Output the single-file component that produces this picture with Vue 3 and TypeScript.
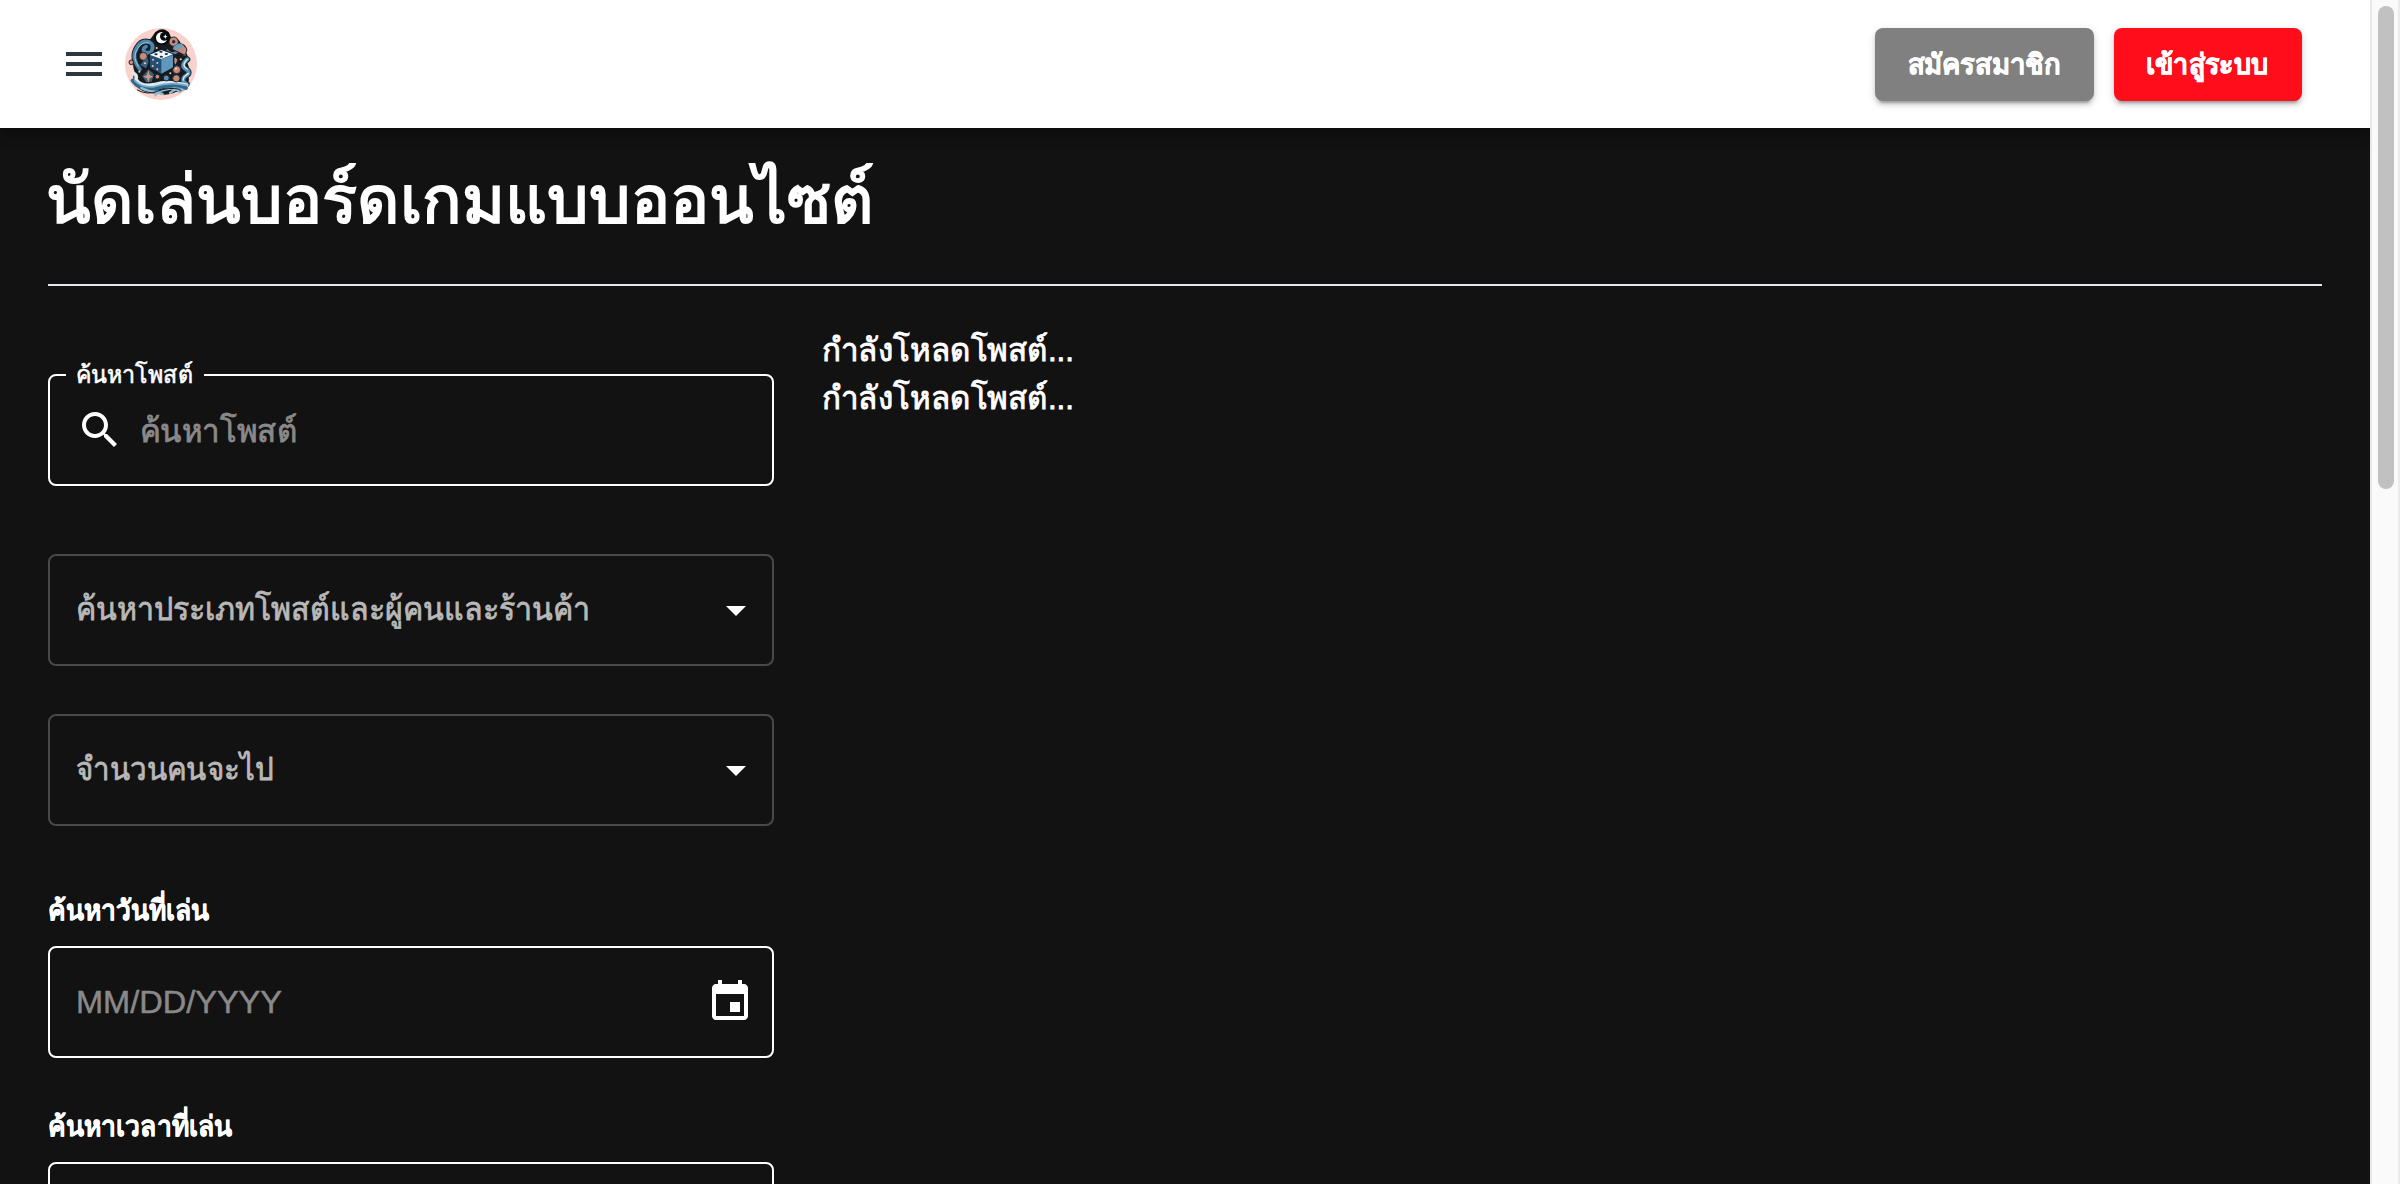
<script setup lang="ts">
import type { Directive } from 'vue'

interface SelectField {
  label: string
  width: number
}

const selects: SelectField[] = [
  { label: 'ค้นหาประเภทโพสต์และผู้คนและร้านค้า', width: 514 },
  { label: 'จำนวนคนจะไป', width: 197 },
]

// Scales a line of text horizontally so that it spans the given width.
const vFit: Directive<HTMLElement, number> = {
  mounted(el, binding) {
    const natural = el.getBoundingClientRect().width
    if (natural > 0) el.style.transform = `scaleX(${binding.value / natural})`
  },
}
</script>

<template>
  <div class="window">
    <div class="page">
      <header class="appbar">
        <div class="brand">
          <button class="menu" aria-label="menu"><i></i><i></i><i></i></button>
          <svg class="logo" viewBox="15 18 216 216">
            <circle cx="123" cy="126" r="108" fill="#f9d3cb" />
            <path d="M44 82Q54 52 92 50L106 30Q126 18 146 30L156 52Q176 46 182 64Q204 68 198 92Q208 104 202 124Q212 140 203 160Q212 176 200 190Q194 212 168 210Q140 224 108 214Q66 216 48 190Q34 166 44 150Q34 128 44 82Z" fill="#171b1d" />
            <g fill="none" stroke-linecap="round" stroke-linejoin="round">
              <path d="M60 142Q32 108 50 78Q64 52 88 60Q104 70 94 88Q82 98 72 88Q68 78 78 74" stroke="#15242f" stroke-width="17" />
              <path d="M60 142Q32 108 50 78Q64 52 88 60Q104 70 94 88Q82 98 72 88Q68 78 78 74" stroke="#4f86ab" stroke-width="11" />
              <path d="M54 132Q36 104 53 80Q66 57 88 63" stroke="#9cc4d8" stroke-width="3" />
              <path d="M142 86Q150 98 166 92Q184 76 194 98" stroke="#4f86ab" stroke-width="8" />
              <path d="M202 112Q178 132 200 143Q214 154 194 164Q182 178 200 186" stroke="#15242f" stroke-width="18" />
              <path d="M202 112Q178 132 200 143Q214 154 194 164Q182 178 200 186" stroke="#5b91b4" stroke-width="12" />
              <path d="M202 112Q182 132 202 141M206 154Q188 164 190 174" stroke="#d8eaf0" stroke-width="4" />
              <path d="M38 154Q52 156 48 172Q62 196 102 188Q146 174 200 190" stroke="#d9eaf0" stroke-width="11" />
              <path d="M38 176Q62 208 104 200Q150 184 198 198" stroke="#33688d" stroke-width="12" />
              <path d="M44 176Q68 200 106 193Q150 178 200 190" stroke="#79abc8" stroke-width="5" />
              <path d="M64 198Q98 216 134 204Q166 194 190 204M106 220Q110 208 128 216M150 213Q170 196 178 210" stroke="#91bdd2" stroke-width="7" />
              <path d="M52 204Q82 220 112 208Q146 194 180 202" stroke="#16202b" stroke-width="3" />
            </g>
            <g fill="#c58b80" stroke="#20252b" stroke-width="3">
              <circle cx="161" cy="59" r="14" />
              <path d="M157 82Q174 52 198 76Q204 84 194 100Q180 92 157 82Z" />
              <circle cx="170" cy="143" r="12" /><circle cx="169" cy="169" r="11" />
              <circle cx="70" cy="103" r="12" /><circle cx="34" cy="121" r="7" />
              <circle cx="112" cy="164" r="7" /><path d="M164 104l10 9-7 17-10-13z" />
            </g>
            <path d="M158 79Q174 56 192 70L174 85Z" fill="#6f9ebd" />
            <circle cx="161" cy="59" r="5" fill="#222b32" />
            <path d="M60 129l20-24 8 12-10 22zM86 142l16 15-7 22-16 2-12-18z" fill="#39617e" />
            <path d="M85 145l4 14 11 5-11 5-4 13-4-13-11-5 11-5z" fill="#d49786" />
            <circle cx="139" cy="168" r="9" fill="#5c8faf" stroke="#17222a" stroke-width="3" />
            <circle cx="126" cy="46" r="24" fill="#080b0c" />
            <circle cx="125" cy="47" r="17" fill="#fff" />
            <circle cx="133" cy="43" r="13" fill="#080b0c" />
            <path d="M136 37l2 5 5 2-5 2-2 5-2-5-5-2 5-2z" fill="#fff" />
            <path d="M87 98L124 82L161 97V137L124 158L88 138Z" fill="#244f72" stroke="#111b24" stroke-width="4" />
            <path d="M89 98L124 84L159 97L124 111Z" fill="#f4f7f6" />
            <path d="M124 112L159 99V136L124 155Z" fill="#5f97bd" />
            <g fill="#173348"><ellipse cx="123" cy="89" rx="5" ry="3" /><ellipse cx="108" cy="97" rx="5" ry="3" /><ellipse cx="139" cy="96" rx="5" ry="3" /><ellipse cx="124" cy="104" rx="5" ry="3" /></g>
            <g fill="#efc2b3"><circle cx="99" cy="113" r="3" /><circle cx="112" cy="123" r="3" /><circle cx="98" cy="132" r="3" /><circle cx="112" cy="142" r="3" /></g>
            <g fill="#f5d3c8"><circle cx="58" cy="149" r="3" /><circle cx="151" cy="154" r="3" /><circle cx="75" cy="124" r="3" /><circle cx="182" cy="112" r="3" /><circle cx="110" cy="78" r="3" /><circle cx="168" cy="140" r="3" /></g>
          </svg>
        </div>
        <div class="actions">
          <button class="btn signup"><span v-fit="153">สมัครสมาชิก</span></button>
          <button class="btn login"><span v-fit="123">เข้าสู่ระบบ</span></button>
        </div>
      </header>

      <main class="content">
        <h1><span v-fit="828" class="fit">นัดเล่นบอร์ดเกมแบบออนไซต์</span></h1>
        <div class="columns">
          <aside class="filters">
            <fieldset class="search">
              <legend><span v-fit="117" class="fit">ค้นหาโพสต์</span></legend>
              <div class="search-row">
                <svg class="search-icon" viewBox="0 0 24 24"><path fill="#fff" d="M15.5 14h-.79l-.28-.27C15.41 12.59 16 11.11 16 9.5 16 5.91 13.09 3 9.5 3S3 5.91 3 9.5 5.91 16 9.5 16c1.61 0 3.09-.59 4.23-1.57l.27.28v.79l5 4.99L20.49 19l-4.99-5zm-6 0C7.01 14 5 11.99 5 9.5S7.01 5 9.5 5 14 7.01 14 9.5 11.99 14 9.5 14z" /></svg>
                <span v-fit="157" class="fit placeholder">ค้นหาโพสต์</span>
              </div>
            </fieldset>

            <div v-for="s in selects" :key="s.label" class="field select">
              <span v-fit="s.width" class="fit">{{ s.label }}</span>
              <svg class="arrow" viewBox="0 0 24 24"><path fill="#fff" d="M7 10l5 5 5-5z" /></svg>
            </div>

            <label class="caption"><span v-fit="161" class="fit">ค้นหาวันที่เล่น</span></label>
            <div class="field picker">
              <span v-fit="206" class="fit date">MM/DD/YYYY</span>
              <svg class="calendar" viewBox="0 0 24 24"><path fill="#fff" d="M17 12h-5v5h5v-5zM16 1v2H8V1H6v2H5c-1.11 0-1.99.9-1.99 2L3 19c0 1.1.89 2 2 2h14c1.1 0 2-.9 2-2V5c0-1.1-.9-2-2-2h-1V1h-2zm3 18H5V8h14v11z" /></svg>
            </div>

            <label class="caption second"><span v-fit="184" class="fit">ค้นหาเวลาที่เล่น</span></label>
            <div class="field picker"></div>
          </aside>
          <section class="posts">
            <p v-for="n in 2" :key="n"><span v-fit="252" class="fit">กำลังโหลดโพสต์...</span></p>
          </section>
        </div>
      </main>
    </div>
    <div class="scrollbar"><div class="thumb"></div></div>
  </div>
</template>

<style>
body { margin: 0; overflow: hidden; background: #121212; }
</style>

<style scoped>
* { box-sizing: border-box; }
.window {
  display: flex;
  height: 1184px;
  overflow: hidden;
  font-family: "Liberation Sans", sans-serif;
  font-size: 32px;
  color: #fff;
  white-space: nowrap;
}
.page { width: 2370px; height: 1184px; overflow: hidden; background: #121212; }
.appbar {
  position: relative;
  display: flex;
  justify-content: space-between;
  align-items: center;
  height: 128px;
  padding: 0 68px 0 66px;
  background: #fff;
  box-shadow: 0 4px 8px -2px rgba(0,0,0,.2), 0 8px 10px rgba(0,0,0,.14), 0 2px 20px rgba(0,0,0,.12);
}
.brand { display: flex; align-items: center; gap: 23px; }
.menu {
  display: flex;
  flex-direction: column;
  gap: 6px;
  width: 36px;
  padding: 0;
  border: 0;
  background: none;
}
.menu i { height: 4px; background: #303640; }
.logo { width: 72px; height: 72px; }
.actions { display: flex; gap: 20px; }
.btn {
  display: flex;
  align-items: center;
  justify-content: center;
  height: 73px;
  padding: 1px 2px 0 0;
  border: 0;
  border-radius: 8px;
  color: #fff;
  font: 700 28px/48px "Liberation Sans", sans-serif;
  -webkit-text-stroke: .6px #fff;
  box-shadow: 0 6px 2px -4px rgba(0,0,0,.2), 0 4px 4px rgba(0,0,0,.14), 0 2px 10px rgba(0,0,0,.12);
}
.signup { width: 219px; background: #808080; }
.login { width: 188px; background: #ff0d1b; }
.fit { display: inline-block; transform-origin: 0 50%; }
.btn span { display: inline-block; }
.content { padding: 25px 48px 0; }
h1 {
  height: 133px;
  margin: 0;
  border-bottom: 2px solid #e5e7eb;
  font-size: 67px;
  font-weight: 400;
  line-height: 94px;
  -webkit-text-stroke: 2px #fff;
}
h1 .fit { margin-left: -2px; }
.columns { display: flex; gap: 48px; }
.filters { width: 726px; padding-top: 75px; }
.search {
  height: 125px;
  margin: 0 0 68px;
  padding: 0 26px;
  min-width: 0;
  border: 2px solid #fff;
  border-radius: 8px;
}
legend {
  width: 138px;
  height: 28px;
  margin-left: -10px;
  padding: 0 10px;
  font-size: 24px;
  line-height: 28px;
  -webkit-text-stroke: .6px #fff;
}
.search-row { display: flex; align-items: center; height: 82px; gap: 16px; }
.search-icon { width: 48px; height: 48px; flex: none; }
.placeholder { color: #898989; -webkit-text-stroke: .8px #898989; }
.field {
  display: flex;
  align-items: center;
  justify-content: space-between;
  height: 112px;
  padding: 0 26px;
  border: 2px solid #fff;
  border-radius: 8px;
}
.select {
  margin-bottom: 48px;
  padding-right: 12px;
  border-color: #494949;
  color: #b8b8b8;
  -webkit-text-stroke: .8px #b8b8b8;
}
.select .fit { margin-top: -3px; }
.arrow { width: 48px; height: 48px; }
.caption {
  display: block;
  height: 48px;
  margin: 60px 0 12px;
  font-size: 28px;
  font-weight: 700;
  line-height: 49px;
  -webkit-text-stroke: .4px #fff;
}
.caption.second { margin-top: 44px; }
.picker { padding-right: 18px; }
.date { color: #898989; -webkit-text-stroke: .5px #898989; }
.calendar { width: 48px; height: 48px; }
.posts { padding-top: 40px; }
.posts p { height: 48px; margin: 0; line-height: 48px; -webkit-text-stroke: .9px #fff; }
.scrollbar {
  width: 30px;
  padding: 6px 4px 0 6px;
  border-left: 2px solid #e8e8e8;
  border-right: 2px solid #ebebeb;
  background: #fafafa;
}
.thumb { width: 16px; height: 483px; border-radius: 8px; background: #c1c1c1; }
</style>
